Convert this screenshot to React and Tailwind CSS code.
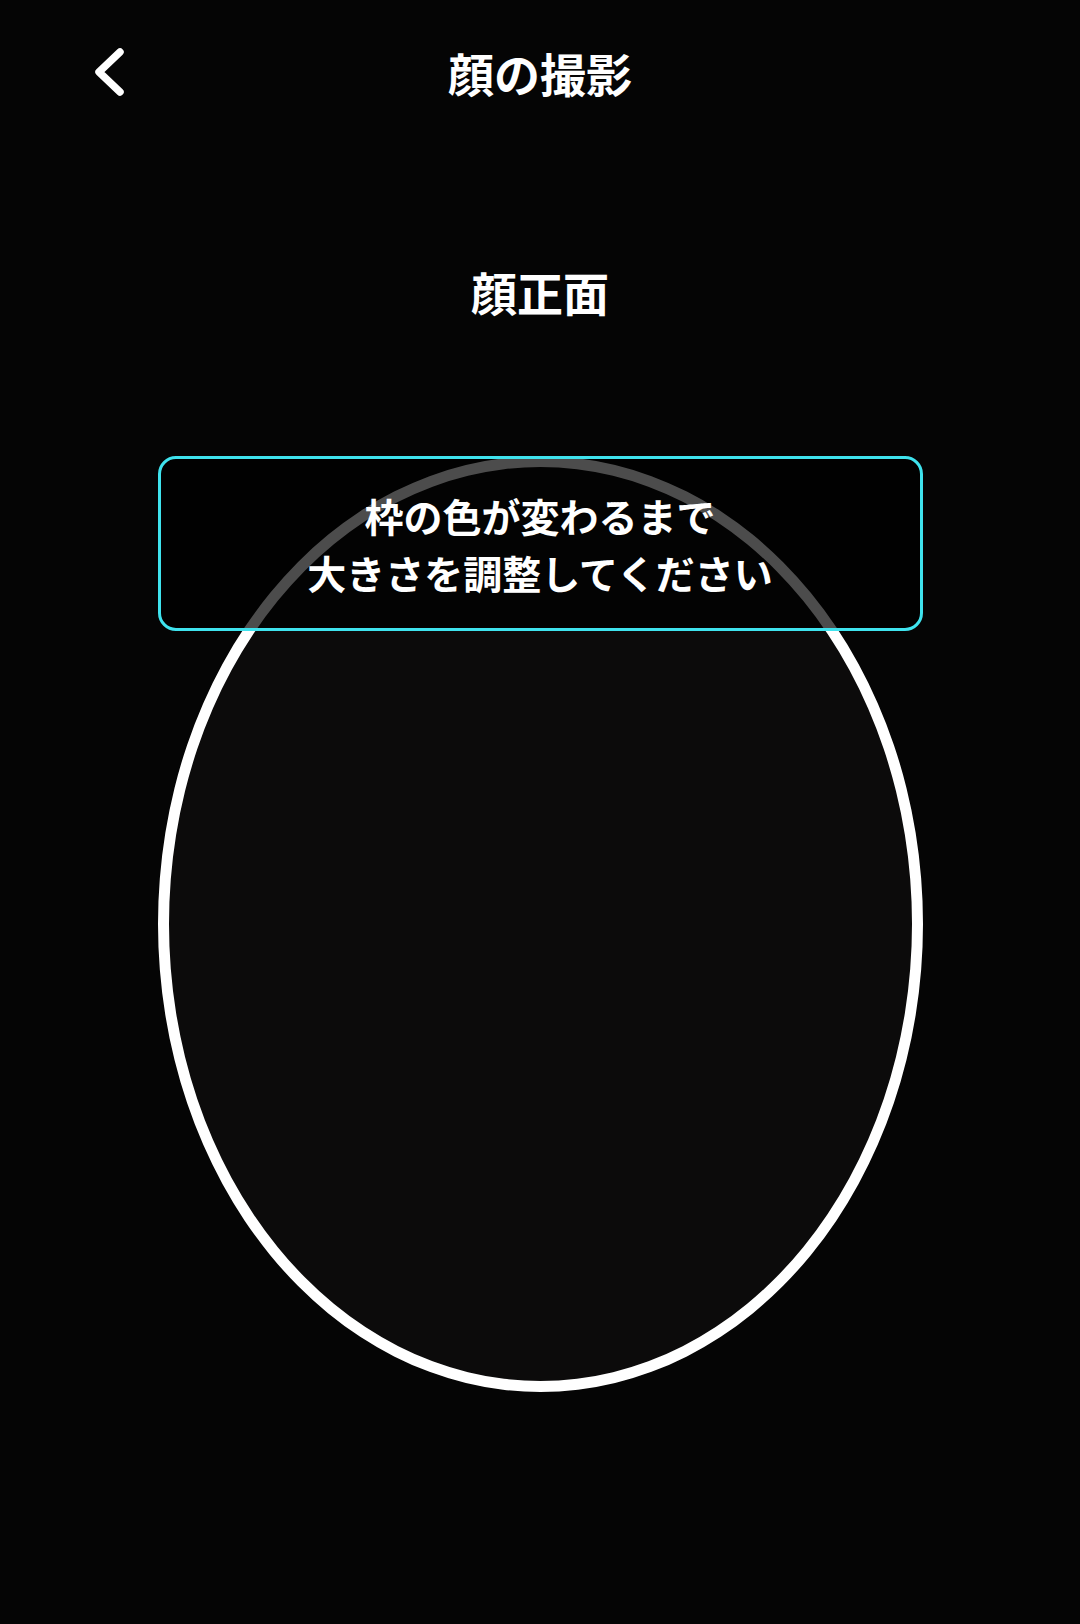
export default function App() {
  return (
    <div
      className="relative min-h-[1624px] w-full bg-[#050505] pt-[42px] text-white"
      style={{ fontFamily: '"Noto Sans CJK JP", "Noto Sans", sans-serif' }}
    >
      {/* Header */}
      <div className="relative flex h-[60px] items-center justify-center">
        <button className="absolute left-[92px] top-1/2 -translate-y-1/2">
          <svg width="34" height="50" viewBox="0 0 34 50" fill="none">
            <path d="M28 5 L7 25 L28 45" stroke="white" strokeWidth="7.5" strokeLinecap="round" strokeLinejoin="round" />
          </svg>
        </button>
        <h1 className="text-[46px] font-bold leading-[60px]">顔の撮影</h1>
      </div>

      {/* Subtitle */}
      <div className="mt-[159px] text-center text-[46px] font-bold leading-[60px]">顔正面</div>

      {/* Face guide */}
      <div className="relative mx-auto mt-[135px] w-[765px]">
        <div className="mt-[3px] h-[936px] w-[765px] rounded-[50%] border-[11px] border-white bg-[#0c0b0b]" />
        <div className="absolute left-0 top-0 flex h-[175px] w-full flex-col items-center rounded-[18px] border-[3px] border-[#3fe3ee] bg-black/70 pt-[28px] text-[39px] font-bold leading-[57px]">
          <span>枠の色が変わるまで</span>
          <span>大きさを調整してください</span>
        </div>
      </div>
    </div>
  )
}
